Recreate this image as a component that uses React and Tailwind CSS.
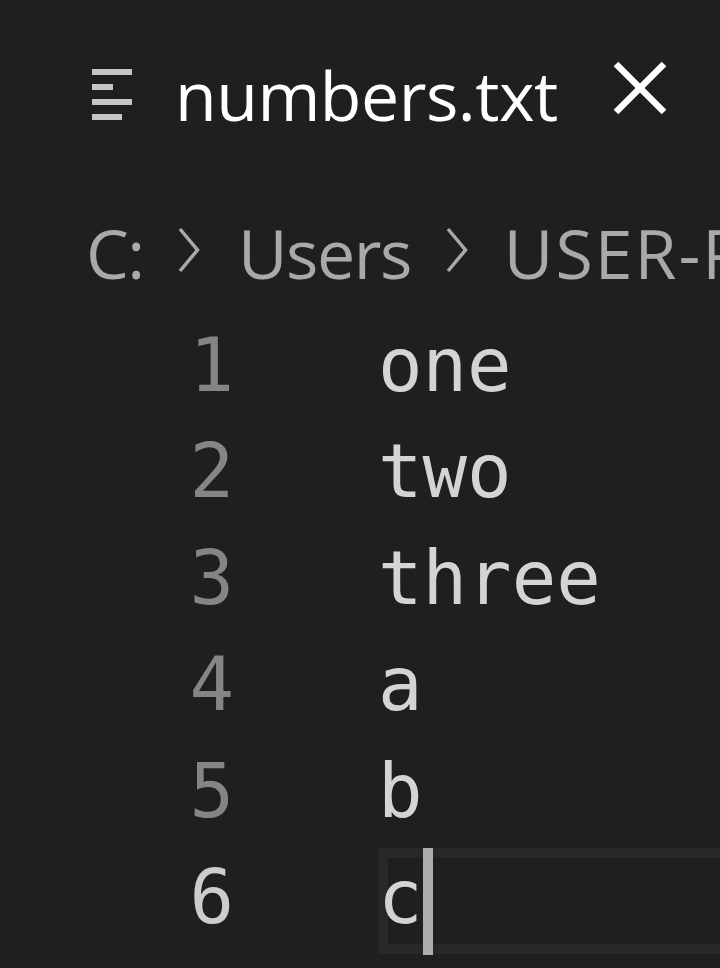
import React from "react";

const lines = ["one", "two", "three", "a", "b", "c"];

function FileIcon() {
  return (
    <svg width="40" height="52" viewBox="0 0 40 52" className="shrink-0">
      <rect x="0" y="0" width="40" height="6" fill="#c5c5c5" />
      <rect x="0" y="15" width="21" height="6" fill="#c5c5c5" />
      <rect x="0" y="30" width="40" height="6" fill="#c5c5c5" />
      <rect x="0" y="45" width="30" height="6" fill="#c5c5c5" />
    </svg>
  );
}

function CloseIcon() {
  return (
    <svg width="54" height="54" viewBox="0 0 54 54" className="shrink-0 mb-[14px]">
      <path d="M3 3 L51 51 M51 3 L3 51" stroke="#ffffff" strokeWidth="6.5" />
    </svg>
  );
}

function Chevron() {
  return (
    <svg width="22" height="46" viewBox="0 0 22 46" className="shrink-0 mb-[6px]">
      <path d="M2 2 L19.5 23 L2 44" stroke="#a9a9a9" strokeWidth="3.5" fill="none" />
    </svg>
  );
}

export default function App() {
  return (
    <div className="w-[720px] h-[968px] bg-[#1f1f1f] overflow-hidden flex flex-col">
      <div className="h-[190px] shrink-0 flex items-center pl-[92px] font-['Open_Sans',sans-serif]">
        <FileIcon />
        <span className="ml-[43px] text-[68px] text-white tracking-[-0.5px] whitespace-nowrap">numbers.txt</span>
        <div className="ml-[55px]"><CloseIcon /></div>
      </div>
      <div className="h-[126px] shrink-0 flex items-center pl-[86px] font-['Open_Sans',sans-serif] text-[68px] text-[#a9a9a9] whitespace-nowrap tracking-[-1.5px]">
        <span className="w-[92px] shrink-0">C:</span>
        <Chevron />
        <span className="ml-[38px]">Users</span>
        <span className="ml-[35px]"><Chevron /></span>
        <span className="ml-[36px] tracking-[2px]">USER-PC</span>
      </div>
      <div className="flex flex-col font-['DejaVu_Sans_Mono',monospace] text-[74px]">
        {lines.map((t, i) => {
          const active = i === lines.length - 1;
          return (
            <div key={i} className="h-[106.4px] shrink-0 flex">
              <div className={`w-[234px] shrink-0 text-right leading-[98px] ${active ? "text-[#cccccc]" : "text-[#858585]"}`}>
                {i + 1}
              </div>
              <div
                className={`ml-[144px] w-[420px] shrink-0 flex ${active ? "shadow-[inset_0_0_0_10px_#282828]" : ""}`}
              >
                <span className="leading-[98px] text-[#d4d4d4] whitespace-pre">{t}</span>
                {active && <div className="w-[10px] h-[107px] bg-[#aeafad]" />}
              </div>
            </div>
          );
        })}
      </div>
    </div>
  );
}
